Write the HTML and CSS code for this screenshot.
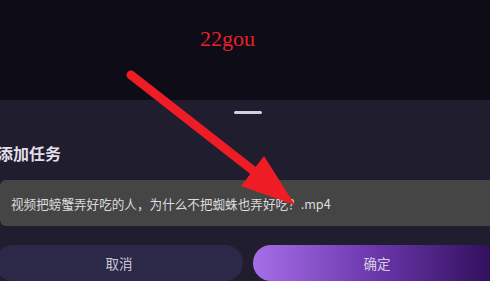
FILE: index.html
```html
<!DOCTYPE html>
<html lang="zh">
<head>
    <meta charset="UTF-8">
    <meta name="viewport" content="width=device-width, initial-scale=1.0">
    <title>添加任务</title>
    <link rel="stylesheet" href="styles.css">
</head>
<body>
    <div class="backdrop">
        <span class="watermark">22gou</span>
    </div>

    <div class="sheet">
        <div class="handle"></div>
        <h2 class="sheet-title">添加任务</h2>
        <div class="file-name">视频把螃蟹弄好吃的人，为什么不把蜘蛛也弄好吃？.mp4</div>
        <div class="actions">
            <button class="btn btn-cancel">取消</button>
            <button class="btn btn-confirm">确定</button>
        </div>
    </div>

    <!-- flèche d'annotation -->
    <svg class="annotation" width="490" height="281" viewBox="0 0 490 281">
        <line x1="131" y1="75" x2="255" y2="172" stroke="#ee1c25" stroke-width="9" stroke-linecap="round"/>
        <polygon points="241,186 264,156 295,205" fill="#ee1c25"/>
    </svg>
</body>
</html>
```

FILE: styles.css
```css
* {
    margin: 0;
    padding: 0;
    box-sizing: border-box;
}

body {
    font-family: "Noto Sans CJK SC", "Noto Sans", sans-serif;
    background: #0e0c16;
    width: 490px;
    height: 281px;
    overflow: hidden;
    position: relative;
}

.backdrop {
    height: 100px;
    padding-top: 28px;
    padding-left: 200px;
}

.watermark {
    font-family: "Liberation Serif", serif;
    font-size: 22px;
    line-height: 22px;
    color: #e8202a;
    display: block;
}

/* Panneau du bas */
.sheet {
    margin-left: -10px;
    width: 516px;
    height: 181px;
    background: #201d2f;
    padding-top: 11px;
}

.handle {
    width: 28px;
    height: 3px;
    border-radius: 2px;
    background: #d3d0da;
    margin: 0 auto;
}

.sheet-title {
    font-size: 16px;
    font-weight: bold;
    line-height: 20px;
    color: #e2dfea;
    margin-top: 29px;
    padding-left: 7px;
}

.file-name {
    margin: 17px 10px 0;
    height: 46px;
    border-radius: 6px;
    background: #454545;
    color: #dcdcdc;
    font-size: 12.6px;
    padding-left: 11px;
    display: flex;
    align-items: center;
    white-space: nowrap;
}

.actions {
    display: flex;
    gap: 10px;
    margin: 19px 5px 0;
}

.btn {
    flex: 1;
    height: 36px;
    border: none;
    border-radius: 18px;
    font-family: inherit;
    font-size: 13.5px;
    color: #cac7d8;
}

.btn-cancel {
    background: #2b2947;
}

.btn-confirm {
    background: linear-gradient(90deg, #a66ee8, #6a36aa 50%, #2c0d56);
    color: #d6cde2;
}

.annotation {
    position: absolute;
    top: 0;
    left: 0;
}
```
